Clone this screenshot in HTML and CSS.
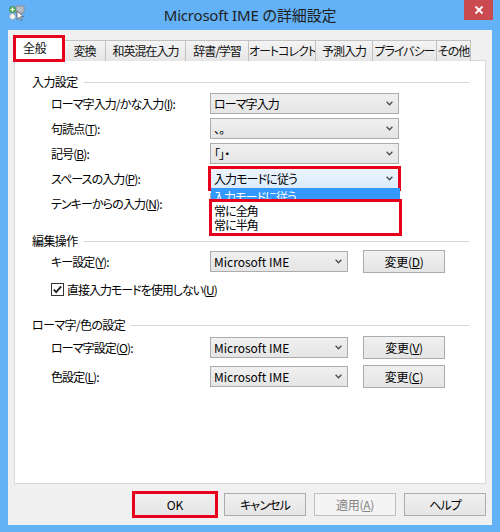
FILE: index.html
```html
<!DOCTYPE html>
<html lang="ja">
<head>
<meta charset="utf-8">
<title>Microsoft IME の詳細設定</title>
<link rel="stylesheet" href="styles.css">
</head>
<body>
<div class="window">
  <div class="titlebar">
    <div class="tb-left">
      <svg class="app-icon" width="16" height="16" viewBox="0 0 16 16">
        <rect x="7" y="1" width="8" height="7" fill="#b8bcc4" stroke="#8a8f98" stroke-width="1"/>
        <circle cx="3.5" cy="4.5" r="3" fill="#5cb85c" stroke="#3e8e3e" stroke-width="0.8"/>
        <path d="M3.5 2.6v3.8M1.6 4.5h3.8" stroke="#fff" stroke-width="1.1"/>
        <circle cx="3.5" cy="11.5" r="3" fill="#f4f4f4" stroke="#9aa0a8" stroke-width="0.8"/>
        <path d="M8 6l0 8.5l2.2-2.1l1.6 3.2l1.3-0.7l-1.6-3.1l3-0.2z" fill="#fff" stroke="#555" stroke-width="0.8" stroke-linejoin="round"/>
      </svg>
    </div>
    <div class="title">Microsoft IME の詳細設定</div>
    <div class="tb-right">
      <div class="close">
        <svg width="10" height="10" viewBox="0 0 10 10"><path d="M1.5 1.5l7 7M8.5 1.5l-7 7" stroke="#fff" stroke-width="1.8"/></svg>
      </div>
    </div>
  </div>

  <div class="client">
    <div class="tabs">
      <div class="tab sel">全般</div>
      <div class="tab">変換</div>
      <div class="tab">和英混在入力</div>
      <div class="tab">辞書/学習</div>
      <div class="tab">オートコレクト</div>
      <div class="tab">予測入力</div>
      <div class="tab">プライバシー</div>
      <div class="tab">その他</div>
    </div>

    <div class="panel">
      <div class="ghead"><span>入力設定</span><i class="gline"></i></div>
      <div class="rows g1">
        <div class="row">
          <span class="lbl">ローマ字入力/かな入力(<u>I</u>):</span>
          <div class="combo wide"><span class="ja">ローマ字入力</span><svg class="chev" width="7" height="5" viewBox="0 0 7 5"><path d="M0.6 0.8L3.5 3.8L6.4 0.8" fill="none" stroke="#4d4d4d" stroke-width="1.3"/></svg></div>
        </div>
        <div class="row">
          <span class="lbl">句読点(<u>T</u>):</span>
          <div class="combo wide"><span class="ja">、。</span><svg class="chev" width="7" height="5" viewBox="0 0 7 5"><path d="M0.6 0.8L3.5 3.8L6.4 0.8" fill="none" stroke="#4d4d4d" stroke-width="1.3"/></svg></div>
        </div>
        <div class="row">
          <span class="lbl">記号(<u>B</u>):</span>
          <div class="combo wide"><span class="ja">「」・</span><svg class="chev" width="7" height="5" viewBox="0 0 7 5"><path d="M0.6 0.8L3.5 3.8L6.4 0.8" fill="none" stroke="#4d4d4d" stroke-width="1.3"/></svg></div>
        </div>
        <div class="row">
          <span class="lbl">スペースの入力(<u>P</u>):</span>
          <div class="combo wide open mark"><span class="ja">入力モードに従う</span><svg class="chev" width="7" height="5" viewBox="0 0 7 5"><path d="M0.6 0.8L3.5 3.8L6.4 0.8" fill="none" stroke="#4d4d4d" stroke-width="1.3"/></svg>
            <div class="dropdown">
              <div class="dd-sel">入力モードに従う</div>
              <div class="dd-box">
                <div class="dd-item">常に全角</div>
                <div class="dd-item">常に半角</div>
              </div>
            </div>
          </div>
        </div>
        <div class="row">
          <span class="lbl">テンキーからの入力(<u>N</u>):</span>
          <div class="combo wide"><span class="ja">入力モードに従う</span></div>
        </div>
      </div>

      <div class="ghead g2h"><span>編集操作</span><i class="gline"></i></div>
      <div class="rows g2">
        <div class="row btnrow">
          <span class="lbl">キー設定(<u>Y</u>):</span>
          <div class="combo narrow"><span>Microsoft IME</span><svg class="chev" width="7" height="5" viewBox="0 0 7 5"><path d="M0.6 0.8L3.5 3.8L6.4 0.8" fill="none" stroke="#4d4d4d" stroke-width="1.3"/></svg></div>
          <div class="btn side">変更(<u>D</u>)</div>
        </div>
        <div class="checkrow">
          <svg class="cbox" width="13" height="13" viewBox="0 0 13 13"><rect x="0.5" y="0.5" width="12" height="12" fill="#fff" stroke="#333"/><path d="M2.8 6.6L5.2 9.2L10.2 3.3" fill="none" stroke="#222" stroke-width="1.8"/></svg>
          <span>直接入力モードを使用しない(<u>U</u>)</span>
        </div>
      </div>

      <div class="ghead g3h"><span>ローマ字/色の設定</span><i class="gline"></i></div>
      <div class="rows g3">
        <div class="row btnrow">
          <span class="lbl">ローマ字設定(<u>O</u>):</span>
          <div class="combo narrow"><span>Microsoft IME</span><svg class="chev" width="7" height="5" viewBox="0 0 7 5"><path d="M0.6 0.8L3.5 3.8L6.4 0.8" fill="none" stroke="#4d4d4d" stroke-width="1.3"/></svg></div>
          <div class="btn side">変更(<u>V</u>)</div>
        </div>
        <div class="row btnrow">
          <span class="lbl">色設定(<u>L</u>):</span>
          <div class="combo narrow"><span>Microsoft IME</span><svg class="chev" width="7" height="5" viewBox="0 0 7 5"><path d="M0.6 0.8L3.5 3.8L6.4 0.8" fill="none" stroke="#4d4d4d" stroke-width="1.3"/></svg></div>
          <div class="btn side">変更(<u>C</u>)</div>
        </div>
      </div>
    </div>

    <div class="buttons">
      <div class="btn default mark">OK</div>
      <div class="btn ja">キャンセル</div>
      <div class="btn disabled">適用(<u>A</u>)</div>
      <div class="btn ja">ヘルプ</div>
    </div>
  </div>
</div>
</body>
</html>
```

FILE: styles.css
```css
* { box-sizing: border-box; }
html, body { margin: 0; padding: 0; }
body {
  width: 500px;
  height: 532px;
  background: #63b1f6;
  font-family: "Noto Sans CJK JP", "Noto Sans", sans-serif;
  font-size: 12px;
  font-feature-settings: "palt";
  color: #000;
  overflow: hidden;
}
.window {
  display: flex;
  flex-direction: column;
  height: 532px;
}
.titlebar {
  height: 30px;
  display: grid;
  grid-template-columns: 1fr auto 1fr;
  align-items: start;
}
.tb-left { padding: 5px 0 0 9px; }
.app-icon { display: block; }
.title {
  font-family: "Noto Sans", "Noto Sans CJK JP", sans-serif;
  font-feature-settings: normal;
  font-size: 15px;
  line-height: 30px;
  color: #1e1e1e;
  letter-spacing: -0.2px;
}
.tb-right { display: flex; justify-content: flex-end; padding-right: 7px; }
.close {
  width: 29px;
  height: 20px;
  background: #c94a4f;
  display: flex;
  align-items: center;
  justify-content: center;
}
.close svg { display: block; }

.client {
  flex: 1;
  margin: 0 8px 7px;
  background: #f0f0f0;
  padding: 6px 6px 9px 6px;
  display: flex;
  flex-direction: column;
}
.tabs {
  display: flex;
  align-items: flex-end;
  height: 25px;
  margin-bottom: -1px;
  position: relative;
  z-index: 1;
}
.tab {
  height: 21px;
  padding: 0;
  line-height: 19px;
  text-align: center;
  letter-spacing: -1px;
  border: 1px solid #c2c2c2;
  border-bottom: none;
  background: linear-gradient(#f4f4f4, #e6e6e6);
  margin-left: -1px;
  white-space: nowrap;
  color: #111;
}
.tab.sel {
  margin-left: 0;
  width: 50px;
  height: 25px;
  line-height: 22px;
  text-align: left;
  padding: 0 8px;
  letter-spacing: -0.3px;
  background: #fff;
  border-color: #d6d6d6;
  position: relative;
  z-index: 2;
  outline: 3px solid #e8001c;
  outline-offset: -2px;
}
.tab:nth-child(2) { border-left: none; margin-left: 0; width: 42px; }
.tab:nth-child(3) { width: 81px; }
.tab:nth-child(4) { width: 64px; }
.tab:nth-child(5) { width: 68px; }
.tab:nth-child(6) { width: 58px; }
.tab:nth-child(7) { width: 65px; }
.tab:nth-child(8) { width: 35px; }

.panel {
  flex: 1;
  background: #fff;
  border: 1px solid #d9d9d9;
  padding: 14px 16px 0 17px;
  display: flex;
  flex-direction: column;
}
.ghead {
  display: flex;
  align-items: center;
  height: 14px;
  line-height: 14px;
  white-space: nowrap;
  letter-spacing: -0.6px;
}
.gline {
  flex: 1;
  height: 0;
  border-top: 1px solid #d5d5d5;
  margin-left: 6px;
  margin-top: 1px;
}
.rows {
  display: flex;
  flex-direction: column;
  padding-left: 19px;
}
.g1 { margin-top: 4px; gap: 4px; }
.g2h { margin-top: 20px; }
.g2 { margin-top: 2px; }
.g3h { margin-top: 21px; }
.g3 { margin-top: 4px; gap: 6px; }
.row {
  display: flex;
  align-items: center;
  height: 21px;
}
.btnrow { height: 23px; }
.lbl {
  width: 159px;
  flex: none;
  white-space: nowrap;
  letter-spacing: -0.9px;
}
.combo {
  position: relative;
  height: 21px;
  border: 1px solid #acacac;
  background: linear-gradient(#f0f0f0, #e5e5e5);
  display: flex;
  align-items: center;
  justify-content: space-between;
  padding: 0 5px 0 3px;
  white-space: nowrap;
}
.ja { letter-spacing: -0.9px; }
.combo.wide { width: 189px; }
.combo.narrow { width: 138px; }
.combo.open {
  background: linear-gradient(#ecf4fc, #dcecfc);
  border-color: #7eb4ea;
}
.chev { display: block; }
.mark {
  outline: 3px solid #e8001c;
  outline-offset: -1px;
}
.dropdown {
  position: absolute;
  top: 100%;
  left: -2px;
  width: 193px;
  z-index: 3;
  letter-spacing: -0.9px;
}
.dd-sel {
  height: 11px;
  margin: 0 2px;
  background: #3399ff;
  color: #fff;
  line-height: 17px;
  padding-left: 2px;
  overflow: hidden;
}
.dd-box {
  border: 3px solid #e8001c;
  background: #fff;
  padding: 2px 0 1px 2px;
  height: 37px;
}
.dd-item { line-height: 14px; }

.btn {
  width: 82px;
  height: 23px;
  border: 1px solid #acacac;
  background: linear-gradient(#f0f0f0, #e5e5e5);
  display: flex;
  align-items: center;
  justify-content: center;
  white-space: nowrap;
}
.btn.side { margin-left: 15px; letter-spacing: -0.3px; }
.btn.default { border-color: #3c7fb1; }
.btn.disabled { color: #838383; border-color: #bfbfbf; background: #f4f4f4; letter-spacing: -0.3px; }

.checkrow {
  display: flex;
  align-items: center;
  gap: 3px;
  height: 16px;
  margin-top: 8px;
  letter-spacing: -1px;
}
.cbox { display: block; }

.buttons {
  display: flex;
  justify-content: flex-end;
  gap: 8px;
  margin-top: 9px;
}
u { text-decoration: underline; text-underline-offset: 1px; }
```
